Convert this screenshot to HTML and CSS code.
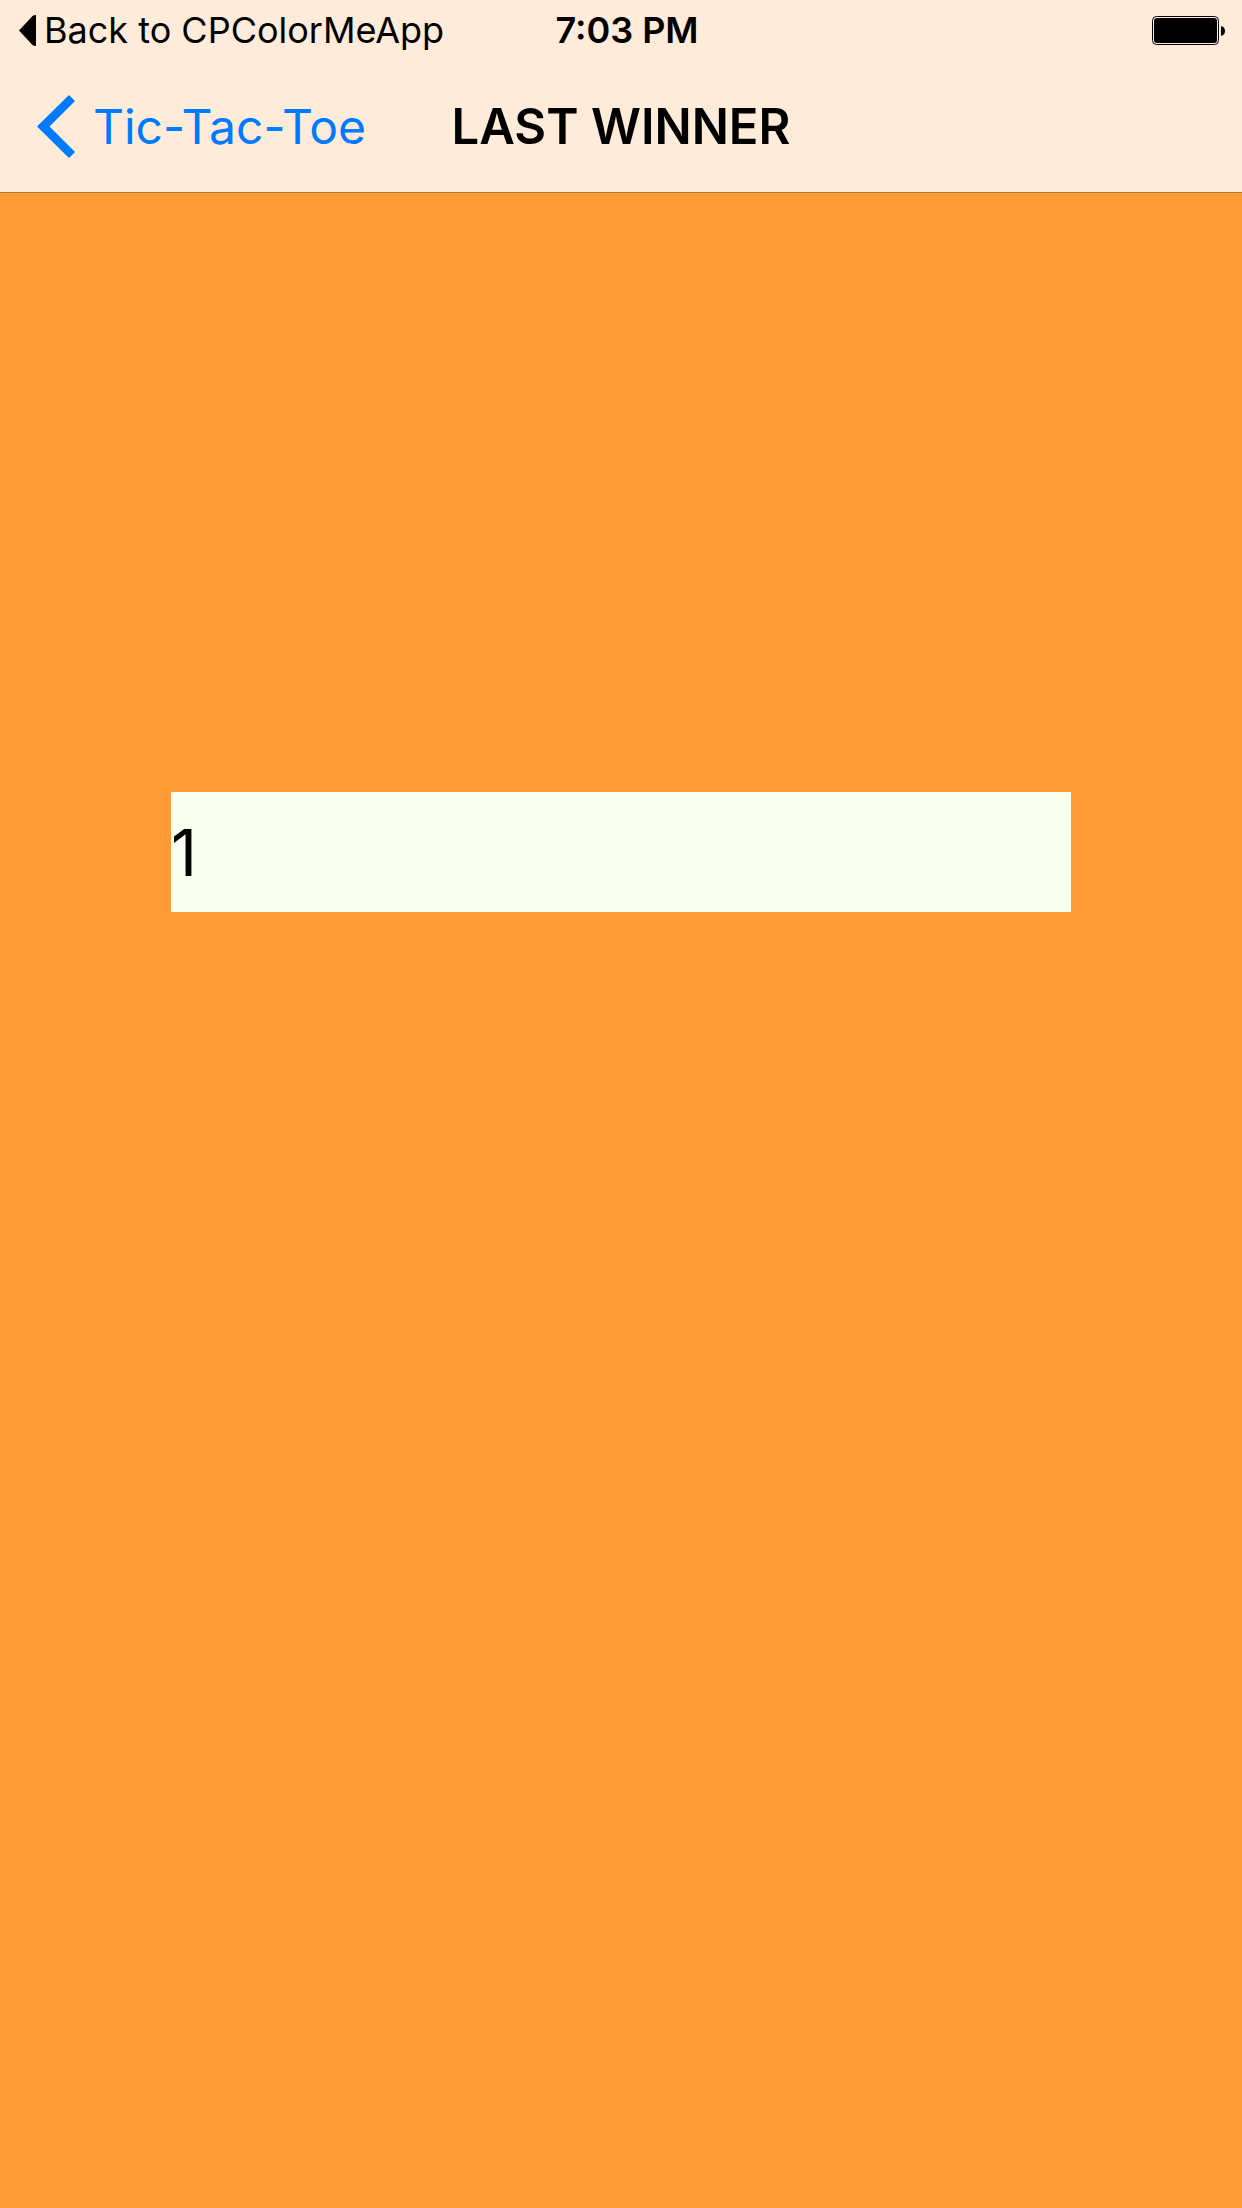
FILE: index.html
```
<!DOCTYPE html>
<html lang="en">
<head>
<meta charset="utf-8">
<meta name="viewport" content="width=device-width, initial-scale=1">
<title>Last Winner</title>
<link rel="stylesheet" href="styles.css">
</head>
<body>
<header class="header">
  <div class="status-bar">
    <a class="return-link" href="#">
      <svg class="return-icon" viewBox="0 0 17 31" aria-hidden="true"><path d="M0 15.500 13.500 1Q14.500 0 17 0V31Q14.500 31 13.500 30z"/></svg>
      <span>Back to CPColorMeApp</span>
    </a>
    <time class="clock">7:03 PM</time>
    <svg class="battery" viewBox="0 0 73 29" role="img" aria-label="Battery full">
      <rect x="0.5" y="0.5" width="66" height="28" rx="4" fill="none" stroke="#000"/>
      <rect x="2" y="2" width="63" height="25" rx="3"/>
      <path d="M69 10q4 1 4 5t-4 5z"/>
    </svg>
  </div>
  <nav class="nav-bar">
    <a class="back-link" href="#">
      <svg class="back-icon" viewBox="0 0 38 63" aria-hidden="true"><path d="M0 31.500 32 0l6 6-25.500 25.500L38 57l-6 6z" fill="#007aff"/></svg>
      <span>Tic-Tac-Toe</span>
    </a>
    <h1 class="title">LAST WINNER</h1>
  </nav>
</header>
<main class="content">
  <output class="winner">1</output>
</main>
</body>
</html>
```
FILE: styles.css
```
* {
  box-sizing: border-box;
}

body {
  margin: 0;
  min-height: 100vh;
  display: flex;
  flex-direction: column;
  background: #ff9b36;
  color: #000;
  font-family: Inter, "Liberation Sans", sans-serif;
}

.header {
  background: #feebd9;
  border-bottom: 1px solid #b0773d;
}

.status-bar {
  display: grid;
  grid-template-columns: 1fr auto 1fr;
  align-items: center;
  height: 60px;
  padding: 0 17px 0 19px;
  font-size: 36px;
}

.return-link {
  display: flex;
  align-items: center;
  gap: 8px;
  color: #000;
  text-decoration: none;
  white-space: nowrap;
}

.return-icon {
  width: 17px;
  height: 31px;
}

.clock {
  padding-left: 10px;
  font-weight: 600;
}

.battery {
  justify-self: end;
  width: 73px;
  height: 29px;
}

.nav-bar {
  display: grid;
  grid-template-columns: 1fr auto 1fr;
  align-items: center;
  height: 132px;
  padding: 0 37px;
}

.back-link {
  display: flex;
  align-items: center;
  gap: 18px;
  color: #007aff;
  font-size: 48px;
  text-decoration: none;
  white-space: nowrap;
}

.back-icon {
  width: 38px;
  height: 63px;
}

.title {
  margin: 0;
  font-size: 49px;
  font-weight: 600;
}

.content {
  flex: 1;
  padding: 599px 171px 0;
}

.winner {
  display: flex;
  align-items: center;
  height: 120px;
  background: #f8ffef;
  font-size: 64px;
}
```
